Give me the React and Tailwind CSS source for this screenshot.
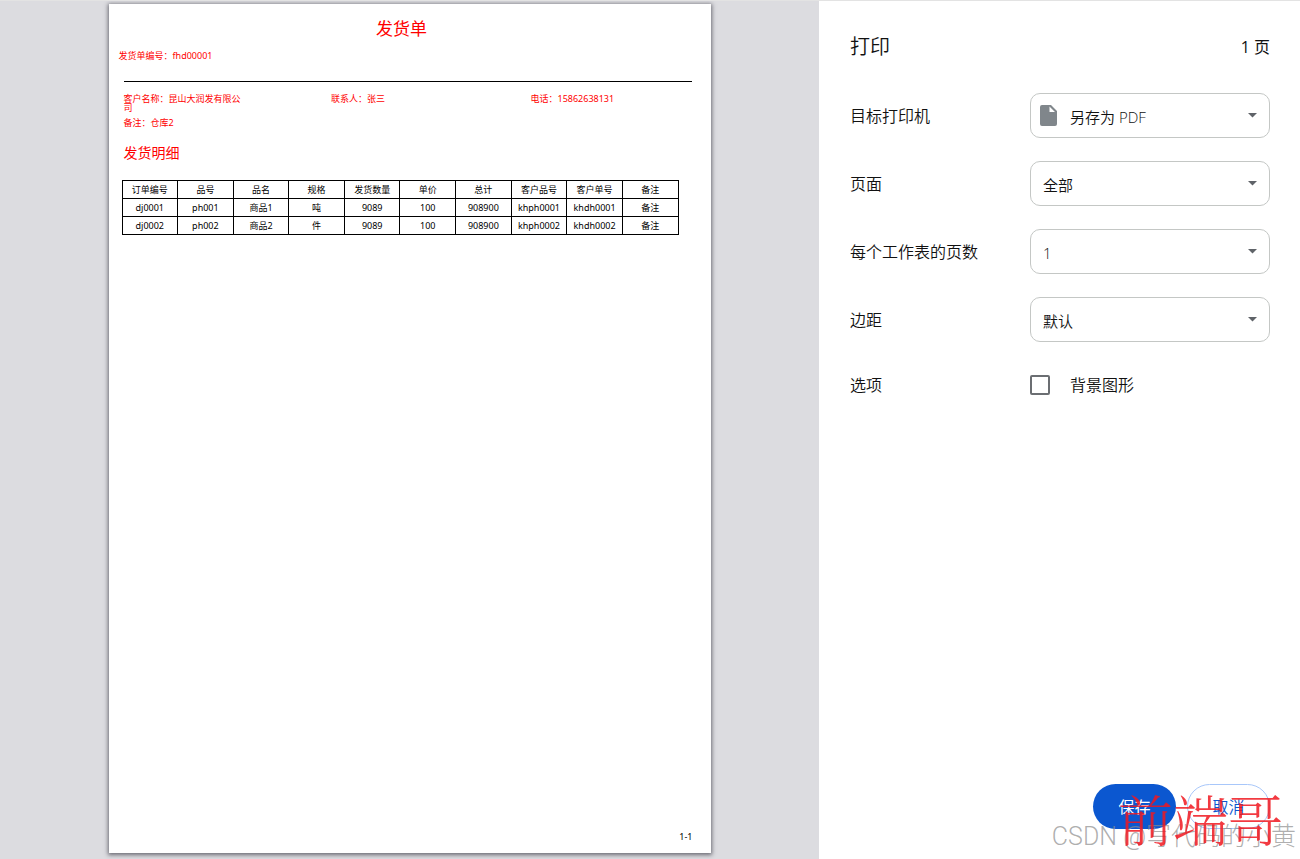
import React, { useState } from 'react';

const columns = ['订单编号', '品号', '品名', '规格', '发货数量', '单价', '总计', '客户品号', '客户单号', '备注'];

const rows = [
  ['dj0001', 'ph001', '商品1', '吨', '9089', '100', '908900', 'khph0001', 'khdh0001', '备注'],
  ['dj0002', 'ph002', '商品2', '件', '9089', '100', '908900', 'khph0002', 'khdh0002', '备注'],
];

const FileIcon = () => (
  <svg viewBox="0 0 17 21" className="w-[17px] h-[21px]" aria-hidden="true">
    <path fill="#80868b" fillRule="evenodd" d="M2 0h9l6 6v13a2 2 0 0 1-2 2H2a2 2 0 0 1-2-2V2a2 2 0 0 1 2-2zm7.500 1.500V7H15z" />
  </svg>
);

const DeliveryNote = () => (
  <article className="flex flex-col w-full max-w-[602px] bg-white text-[9px] leading-[9px] text-[#ff0000] shadow-[0_1px_4px_1px_rgba(60,60,70,0.7)] font-['Noto_Sans','Noto_Sans_CJK_SC',sans-serif]">
    <h1 className="mt-[15px] mr-4 text-center text-[17px] leading-5">发货单</h1>
    <p className="mt-3 ml-[10px]">发货单编号：fhd00001</p>
    <hr className="mt-[21px] ml-[15px] mr-[19px] border-t border-black" />
    <div className="mt-3 ml-[15px] flex">
      <p className="w-[35%]"><span className="block w-[120px]">客户名称：昆山大润发有限公司</span></p>
      <p className="w-[34%] pl-[2px]">联系人：张三</p>
      <p className="pl-[2px]">电话：15862638131</p>
    </div>
    <p className="mt-[6px] ml-[15px]">备注：仓库2</p>
    <h2 className="mt-4 ml-[15px] text-[14px] leading-5">发货明细</h2>
    <div className="mt-[17px] ml-[13px] mr-8">
      <table className="w-full table-fixed border-collapse text-black text-center">
        <thead>
          <tr className="h-[18px]">
            {columns.map((name) => (
              <th key={name} className="border border-black p-0 font-normal">{name}</th>
            ))}
          </tr>
        </thead>
        <tbody>
          {rows.map((row) => (
            <tr key={row[0]} className="h-[18px]">
              {row.map((cell, i) => (
                <td key={i} className="border border-black p-0">{cell}</td>
              ))}
            </tr>
          ))}
        </tbody>
      </table>
    </div>
    <p className="mt-auto mb-3 mr-[18px] text-right text-black">1-1</p>
  </article>
);

const SelectRow = ({ id, label, options, icon }) => (
  <div className="flex items-center h-[45px]">
    <label htmlFor={id} className="w-[180px] shrink-0">{label}</label>
    <div className="relative flex-1">
      <select
        id={id}
        className={`appearance-none w-full h-[45px] rounded-[10px] border border-[#c4c7c5] bg-white pt-[2px] text-[15px] ${icon ? 'pl-[39px]' : 'pl-3'}`}
      >
        {options.map((option) => (
          <option key={option}>{option}</option>
        ))}
      </select>
      {icon && <span className="absolute left-[10px] top-3 pointer-events-none">{icon}</span>}
      <svg viewBox="0 0 9 5" className="absolute right-[13px] top-5 w-[9px] h-[5px] pointer-events-none" aria-hidden="true">
        <path fill="#5f6368" d="M0 0h9L4.500 4.500z" />
      </svg>
    </div>
  </div>
);

const PrintSettings = () => {
  const [background, setBackground] = useState(false);

  return (
    <aside className="flex flex-col w-[481px] shrink-0 bg-white pl-[31px] pr-[30px] text-base leading-6 text-[#111111] font-[350]">
      <header className="mt-8 flex items-center justify-between">
        <h1 className="text-xl leading-7">打印</h1>
        <span className="font-normal">1 页</span>
      </header>
      <div className="mt-8 flex flex-col gap-[23px]">
        <SelectRow id="printer" label="目标打印机" options={['另存为 PDF']} icon={<FileIcon />} />
        <SelectRow id="pages" label="页面" options={['全部', '自定义']} />
        <SelectRow id="per-sheet" label="每个工作表的页数" options={['1', '2', '4', '6']} />
        <SelectRow id="margins" label="边距" options={['默认', '无', '最小值']} />
        <div className="flex items-center h-10">
          <span className="w-[180px]">选项</span>
          <label className="flex items-center gap-5">
            <input
              type="checkbox"
              checked={background}
              onChange={(e) => setBackground(e.target.checked)}
              className="appearance-none w-5 h-5 rounded-[2px] border-2 border-[#6b6e72] checked:bg-[#0b57d0]"
            />
            背景图形
          </label>
        </div>
      </div>
      <footer className="mt-auto mb-[30px] flex justify-end gap-[11px]">
        <button type="button" className="w-[83px] h-[45px] rounded-full bg-[#0b57d0] text-white font-normal">保存</button>
        <button type="button" className="w-[83px] h-[45px] rounded-full border border-[#a8c7fa] text-[#0b57d0]">取消</button>
      </footer>
    </aside>
  );
};

const App = () => (
  <div className="relative flex h-screen min-h-[480px] overflow-hidden border-t border-[#e3e3e3] font-['Open_Sans','Noto_Sans_CJK_SC',sans-serif]">
    <main className="flex flex-1 justify-center bg-[#dcdce0] pt-[3px] pb-[6px]">
      <DeliveryNote />
    </main>
    <PrintSettings />
    <p className="absolute right-1 bottom-2 text-[25px] leading-7 text-[#8c8c8c]/70 pointer-events-none whitespace-nowrap font-['Roboto','Noto_Sans_CJK_SC',sans-serif] font-light">
      CSDN @写代码的小黄
    </p>
    <p className="absolute right-[17px] bottom-1 text-[55px] leading-[64px] text-[#f01820]/85 pointer-events-none whitespace-nowrap font-['Liberation_Serif','Noto_Serif_CJK_SC','Noto_Sans_CJK_SC',serif] font-light">
      前端哥
    </p>
  </div>
);

export default App;
